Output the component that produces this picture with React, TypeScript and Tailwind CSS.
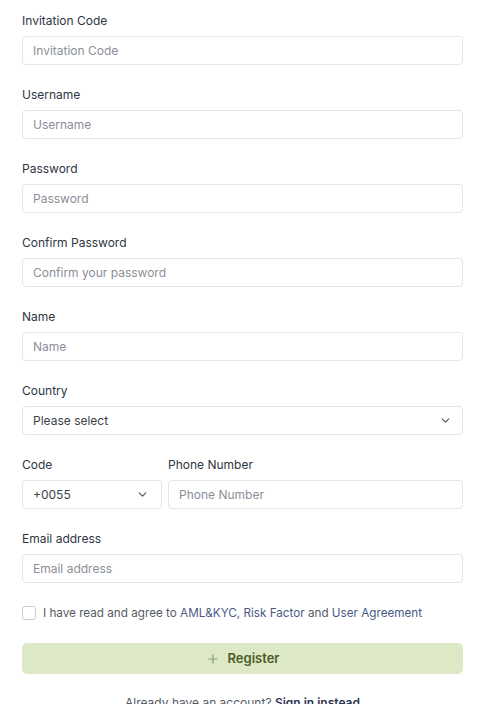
import { ChevronDown, Plus } from 'lucide-react';

interface FieldProps {
  label: string;
  placeholder: string;
  type?: string;
}

function Field({ label, placeholder, type = 'text' }: FieldProps) {
  return (
    <div className="flex flex-col">
      <label className="text-[12px] leading-[18px] text-[#2f3542] mb-[6px]">{label}</label>
      <input
        type={type}
        placeholder={placeholder}
        className="h-[29px] w-full rounded-[4px] border border-[#e3e5e8] px-[10px] text-[12px] text-[#333] placeholder:text-[#8a8f98] outline-none"
      />
    </div>
  );
}

function SelectBox({ value, className }: { value: string; className?: string }) {
  return (
    <div
      className={`h-[29px] rounded-[4px] border border-[#e3e5e8] pl-[10px] pr-[10px] flex items-center justify-between text-[12px] text-[#3a3f4a] ${className ?? ''}`}
    >
      <span>{value}</span>
      <ChevronDown className="h-[13px] w-[13px] text-[#555]" strokeWidth={2} />
    </div>
  );
}

export default function App() {
  return (
    <div
      className="w-[483px] h-[704px] overflow-hidden bg-white px-[22px] pt-[12px]"
      style={{ fontFamily: 'Inter, "Noto Sans", sans-serif' }}
    >
      <div className="w-[441px] flex flex-col gap-[21px]">
        <Field label="Invitation Code" placeholder="Invitation Code" />
        <Field label="Username" placeholder="Username" />
        <Field label="Password" placeholder="Password" type="password" />
        <Field label="Confirm Password" placeholder="Confirm your password" type="password" />
        <Field label="Name" placeholder="Name" />

        <div className="flex flex-col">
          <label className="text-[12px] leading-[18px] text-[#2f3542] mb-[6px]">Country</label>
          <SelectBox value="Please select" />
        </div>

        <div className="flex gap-[6px]">
          <div className="flex flex-col w-[140px]">
            <label className="text-[12px] leading-[18px] text-[#2f3542] mb-[6px]">Code</label>
            <SelectBox value="+0055" className="pr-[12px]" />
          </div>
          <div className="flex flex-col flex-1">
            <label className="text-[12px] leading-[18px] text-[#2f3542] mb-[6px]">Phone Number</label>
            <input
              placeholder="Phone Number"
              className="h-[29px] w-full rounded-[4px] border border-[#e3e5e8] px-[10px] text-[12px] placeholder:text-[#8a8f98] outline-none"
            />
          </div>
        </div>

        <Field label="Email address" placeholder="Email address" type="email" />
      </div>

      <label className="mt-[21px] flex items-center gap-[7px] text-[11.7px] leading-[18px] text-[#555b66]">
        <span className="h-[14px] w-[14px] rounded-[3px] border border-[#c9ccd1] bg-white" />
        <span>
          I have read and agree to <span className="text-[#4a5a86]">AML&amp;KYC</span>,{' '}
          <span className="text-[#4a5a86]">Risk Factor</span> and{' '}
          <span className="text-[#4a5a86]">User Agreement</span>
        </span>
      </label>

      <button className="mt-[21px] w-[441px] h-[31px] rounded-[5px] bg-[#dce8c6] flex items-center justify-center gap-[8px] text-[13px] font-semibold text-[#4b5c28]">
        <Plus className="h-[14px] w-[14px] text-[#8b9683]" strokeWidth={2} />
        Register
      </button>

      <p className="mt-[20px] w-[441px] text-center text-[12px] leading-[18px] text-[#555b66]">
        Already have an account? <span className="font-semibold text-[#2c3555]">Sign in instead</span>
      </p>
    </div>
  );
}
